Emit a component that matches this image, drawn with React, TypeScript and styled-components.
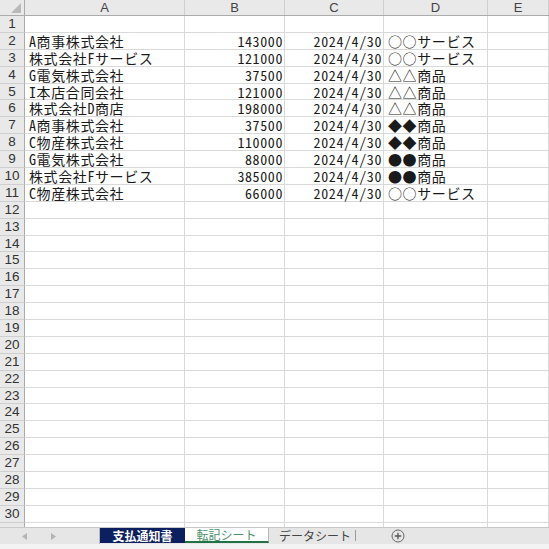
import React from "react";
import styled, { createGlobalStyle } from "styled-components";

const Global = createGlobalStyle`
  html, body { margin: 0; padding: 0; background: #fff; }
  #root { width: 549px; height: 549px; }
`;

const COLS = "25px 160px 100px 99px 104px 1fr";
const CELL_FONT = `"Noto Sans Mono CJK JP", "Noto Sans CJK JP", "DejaVu Sans Mono", monospace`;

const Sheet = styled.div`
  width: 549px;
  height: 549px;
  overflow: hidden;
  background: #fff;
  display: flex;
  flex-direction: column;
`;

const HeaderRow = styled.div`
  display: grid;
  grid-template-columns: ${COLS};
  height: 16px;
  flex: none;
  background: #e9e9e9;
  border-bottom: 1px solid #ababab;
  box-sizing: border-box;
`;

const Corner = styled.div`
  position: relative;
  border-right: 1px solid #ababab;
  background: #e9e9e9;
`;

const CornerTri = styled.svg`
  position: absolute;
  right: 3px;
  bottom: 2px;
`;

const ColHead = styled.div`
  display: flex;
  align-items: center;
  justify-content: center;
  border-right: 1px solid #cfcfcf;
  font-family: "Liberation Sans", Arial, sans-serif;
  font-size: 13px;
  color: #444;
  line-height: 14px;
`;

const Row = styled.div`
  display: grid;
  grid-template-columns: ${COLS};
  height: 16.9px;
  flex: none;
  box-sizing: border-box;
`;

const RowHead = styled.div`
  display: flex;
  align-items: center;
  justify-content: center;
  background: #e9e9e9;
  border-right: 1px solid #ababab;
  border-bottom: 1px solid #cfcfcf;
  font-family: "Liberation Sans", Arial, sans-serif;
  font-size: 13.5px;
  line-height: 14px;
  color: #333;
  box-sizing: border-box;
`;

const Cell = styled.div<{ $align?: "left" | "right" }>`
  display: flex;
  align-items: center;
  justify-content: ${(p) => (p.$align === "right" ? "flex-end" : "flex-start")};
  padding: ${(p) => (p.$align === "right" ? "0 1px 0 0" : "0 0 0 4px")};
  border-right: 1px solid #d9d9d9;
  border-bottom: 1px solid #d9d9d9;
  box-sizing: border-box;
  font-family: ${CELL_FONT};
  font-size: 14px;
  letter-spacing: 0.6px;
  line-height: 14px;
  color: #1a1a1a;
  white-space: nowrap;
  overflow: visible;
`;

const Filler = styled.div`
  flex: 1;
  display: grid;
  grid-template-columns: ${COLS};
`;

const FillHead = styled.div`
  background: #e9e9e9;
  border-right: 1px solid #ababab;
`;

const FillCell = styled.div`
  border-right: 1px solid #d9d9d9;
`;

const TabBar = styled.div`
  flex: none;
  height: 17px;
  background: #e6e6e6;
  border-top: 1px solid #c8c8c8;
  box-sizing: border-box;
  display: flex;
  align-items: stretch;
`;

const NavArea = styled.div`
  width: 100px;
  display: flex;
  align-items: center;
  padding-left: 22px;
  gap: 24px;
  box-sizing: border-box;
  border-right: 1px solid #b8b8b8;
`;

const Tab = styled.div<{ $kind: "colored" | "active" | "plain" }>`
  display: flex;
  align-items: center;
  justify-content: center;
  font-family: "Noto Sans CJK JP", sans-serif;
  font-size: 12px;
  line-height: 14px;
  box-sizing: border-box;
  width: ${(p) => (p.$kind === "plain" ? "86px" : p.$kind === "active" ? "84px" : "85px")};
  background: ${(p) =>
    p.$kind === "colored" ? "#0c1f5e" : p.$kind === "active" ? "#ffffff" : "transparent"};
  color: ${(p) =>
    p.$kind === "colored" ? "#ffffff" : p.$kind === "active" ? "#4a9066" : "#444"};
  font-weight: ${(p) => (p.$kind === "colored" ? 700 : 400)};
  border-right: ${(p) => (p.$kind === "active" ? "1px solid #b8b8b8" : "none")};
  border-bottom: ${(p) => (p.$kind === "active" ? "2px solid #217346" : "none")};
  margin-bottom: ${(p) => (p.$kind === "plain" ? "0" : "1px")};
  padding-left: ${(p) => (p.$kind === "plain" ? "6px" : "0")};
`;

const Sep = styled.div`
  width: 1px;
  background: #9a9a9a;
  margin: 2px 0 3px 0;
`;

const AddBtn = styled.div`
  display: flex;
  align-items: center;
  margin-left: 35px;
`;

const Status = styled.div`
  flex: none;
  height: 5px;
  background: #f3f3f3;
`;

const rows: [string, string, string, string][] = [
  ["A商事株式会社", "143000", "2024/4/30", "○○サービス"],
  ["株式会社Fサービス", "121000", "2024/4/30", "○○サービス"],
  ["G電気株式会社", "37500", "2024/4/30", "△△商品"],
  ["I本店合同会社", "121000", "2024/4/30", "△△商品"],
  ["株式会社D商店", "198000", "2024/4/30", "△△商品"],
  ["A商事株式会社", "37500", "2024/4/30", "◆◆商品"],
  ["C物産株式会社", "110000", "2024/4/30", "◆◆商品"],
  ["G電気株式会社", "88000", "2024/4/30", "●●商品"],
  ["株式会社Fサービス", "385000", "2024/4/30", "●●商品"],
  ["C物産株式会社", "66000", "2024/4/30", "○○サービス"],
];

const Arrow = ({ dir }: { dir: "l" | "r" }) => (
  <svg width="5" height="7" viewBox="0 0 5 7">
    {dir === "l" ? (
      <polygon points="5,0 5,7 0,3.5" fill="#b4b4b4" />
    ) : (
      <polygon points="0,0 0,7 5,3.5" fill="#b4b4b4" />
    )}
  </svg>
);

export default function App() {
  const all = Array.from({ length: 30 }, (_, i) => i + 1);
  return (
    <>
      <Global />
      <Sheet>
        <HeaderRow>
          <Corner>
            <CornerTri width="10" height="10" viewBox="0 0 10 10">
              <polygon points="10,0 10,10 0,10" fill="#b9b9b9" />
            </CornerTri>
          </Corner>
          {["A", "B", "C", "D", "E"].map((c) => (
            <ColHead key={c}>{c}</ColHead>
          ))}
        </HeaderRow>
        {all.map((n) => {
          const d = n >= 2 && n <= 11 ? rows[n - 2] : null;
          return (
            <Row key={n}>
              <RowHead>{n}</RowHead>
              <Cell>{d ? d[0] : ""}</Cell>
              <Cell $align="right">{d ? d[1] : ""}</Cell>
              <Cell $align="right">{d ? d[2] : ""}</Cell>
              <Cell>{d ? d[3] : ""}</Cell>
              <Cell />
            </Row>
          );
        })}
        <Filler>
          <FillHead />
          <FillCell />
          <FillCell />
          <FillCell />
          <FillCell />
          <FillCell />
        </Filler>
        <TabBar>
          <NavArea>
            <Arrow dir="l" />
            <Arrow dir="r" />
          </NavArea>
          <Tab $kind="colored">支払通知書</Tab>
          <Tab $kind="active">転記シート</Tab>
          <Tab $kind="plain">データシート</Tab>
          <Sep />
          <AddBtn>
            <svg width="14" height="14" viewBox="0 0 14 14">
              <circle cx="7" cy="7" r="6" fill="none" stroke="#666" strokeWidth="1" />
              <path d="M7 3.8V10.2M3.8 7H10.2" stroke="#555" strokeWidth="1.3" />
            </svg>
          </AddBtn>
        </TabBar>
        <Status />
      </Sheet>
    </>
  );
}
